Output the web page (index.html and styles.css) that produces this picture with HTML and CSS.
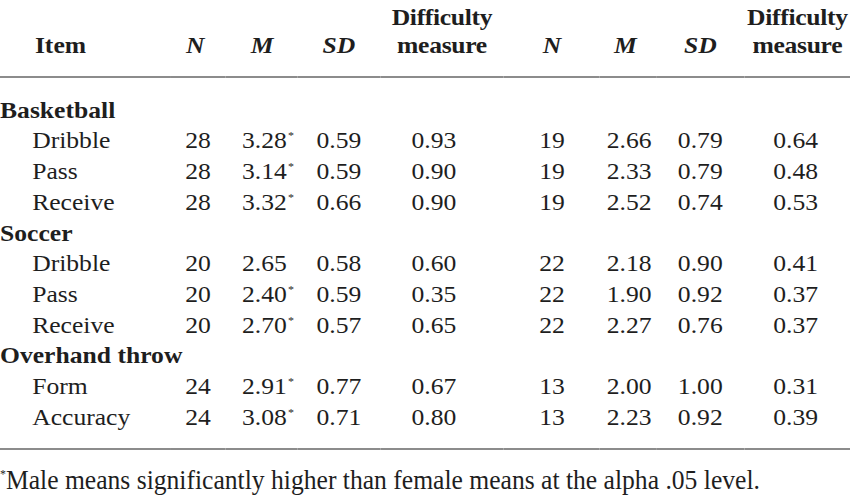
FILE: index.html
```html
<!DOCTYPE html>
<html lang="en">
<head>
<meta charset="utf-8">
<title>Item difficulty table</title>
<link rel="stylesheet" href="styles.css">
</head>
<body>
<div class="sheet">
  <table class="tbl">
    <colgroup>
      <col class="w-item"><col class="w-n1"><col class="w-m1"><col class="w-sd1"><col class="w-d1">
      <col class="w-n2"><col class="w-m2"><col class="w-sd2"><col class="w-d2">
    </colgroup>
    <thead>
      <tr>
        <th class="h-item">Item</th>
        <th class="h-n1"><i>N</i></th>
        <th><i>M</i></th>
        <th><i>SD</i></th>
        <th class="h-d">Difficulty<br>measure</th>
        <th><i>N</i></th>
        <th class="h-m2"><i>M</i></th>
        <th><i>SD</i></th>
        <th class="h-d">Difficulty<br>measure</th>
      </tr>
    </thead>
    <tbody>
      <tr class="cat first"><td colspan="9">Basketball</td></tr>
      <tr><td class="sub">Dribble</td><td>28</td><td class="m1">3.28<sup class="ast">*</sup></td><td>0.59</td><td class="d1">0.93</td><td>19</td><td class="m2">2.66</td><td>0.79</td><td class="d2">0.64</td></tr>
      <tr><td class="sub">Pass</td><td>28</td><td class="m1">3.14<sup class="ast">*</sup></td><td>0.59</td><td class="d1">0.90</td><td>19</td><td class="m2">2.33</td><td>0.79</td><td class="d2">0.48</td></tr>
      <tr><td class="sub">Receive</td><td>28</td><td class="m1">3.32<sup class="ast">*</sup></td><td>0.66</td><td class="d1">0.90</td><td>19</td><td class="m2">2.52</td><td>0.74</td><td class="d2">0.53</td></tr>
      <tr class="cat"><td colspan="9">Soccer</td></tr>
      <tr><td class="sub">Dribble</td><td>20</td><td class="m1">2.65</td><td>0.58</td><td class="d1">0.60</td><td>22</td><td class="m2">2.18</td><td>0.90</td><td class="d2">0.41</td></tr>
      <tr><td class="sub">Pass</td><td>20</td><td class="m1">2.40<sup class="ast">*</sup></td><td>0.59</td><td class="d1">0.35</td><td>22</td><td class="m2">1.90</td><td>0.92</td><td class="d2">0.37</td></tr>
      <tr><td class="sub">Receive</td><td>20</td><td class="m1">2.70<sup class="ast">*</sup></td><td>0.57</td><td class="d1">0.65</td><td>22</td><td class="m2">2.27</td><td>0.76</td><td class="d2">0.37</td></tr>
      <tr class="cat"><td colspan="9">Overhand throw</td></tr>
      <tr><td class="sub">Form</td><td>24</td><td class="m1">2.91<sup class="ast">*</sup></td><td>0.77</td><td class="d1">0.67</td><td>13</td><td class="m2">2.00</td><td>1.00</td><td class="d2">0.31</td></tr>
      <tr class="last"><td class="sub">Accuracy</td><td>24</td><td class="m1">3.08<sup class="ast">*</sup></td><td>0.71</td><td class="d1">0.80</td><td>13</td><td class="m2">2.23</td><td>0.92</td><td class="d2">0.39</td></tr>
    </tbody>
  </table>
</div>
<p class="note"><sup class="note-ast">*</sup>Male means significantly higher than female means at the alpha .05 level.</p>
</body>
</html>
```

FILE: styles.css
```css
html, body {
  margin: 0;
  padding: 0;
  background: #ffffff;
}

body {
  width: 850px;
  height: 496px;
  overflow: hidden;
  color: #1e1e1e;
  font-family: "Liberation Serif", "Times New Roman", serif;
}

.sheet {
  width: 780px;
  padding-top: 3px;
  transform: scaleX(1.09);
  transform-origin: 0 0;
}

.tbl {
  width: 780px;
  table-layout: fixed;
  border-collapse: collapse;
  font-size: 23.5px;
}

.w-item { width: 156px; }
.w-n1 { width: 51.4px; }
.w-m1 { width: 66px; }
.w-sd1 { width: 75.2px; }
.w-d1 { width: 113.8px; }
.w-n2 { width: 88.1px; }
.w-m2 { width: 51.4px; }
.w-sd2 { width: 81.2px; }
.w-d2 { width: 96.9px; }

.tbl th {
  font-weight: bold;
  line-height: 28px;
  vertical-align: bottom;
  text-align: center;
  padding: 0 0 17px 0;
  white-space: nowrap;
}

.tbl th.h-item {
  text-align: left;
  padding-left: 32px;
}

.tbl th.h-n1 {
  padding-right: 5px;
}

.tbl th.h-m2 {
  padding-right: 5px;
}

.tbl th.h-d {
  letter-spacing: -0.3px;
}

.tbl thead tr {
  border-bottom: 2px solid #8c8c8c;
}

.tbl td {
  line-height: 30.7px;
  padding: 0;
  text-align: center;
  white-space: nowrap;
}

.tbl tr.cat td {
  font-weight: bold;
  text-align: left;
}

.tbl tr.first td {
  padding-top: 16.7px;
}

.tbl tr.last td {
  padding-bottom: 15.6px;
  border-bottom: 2px solid #8c8c8c;
}

.tbl td.sub {
  text-align: left;
  padding-left: 29.5px;
}

.tbl td.m1 {
  text-align: left;
  padding-left: 14.7px;
}

.tbl td.d1 {
  padding-right: 14.7px;
}

.tbl td.m2 {
  padding-left: 2px;
}

.tbl td.d2 {
  padding-right: 3px;
}

.ast {
  font-size: 11px;
  line-height: 0;
  vertical-align: 9px;
  margin-left: 1px;
}

.note {
  margin: 13.5px 0 0 0;
  font-size: 28px;
  line-height: 32px;
  white-space: nowrap;
  transform: scaleX(0.914);
  transform-origin: 0 0;
}

.note-ast {
  font-size: 13px;
  line-height: 0;
  vertical-align: 11px;
}
```
